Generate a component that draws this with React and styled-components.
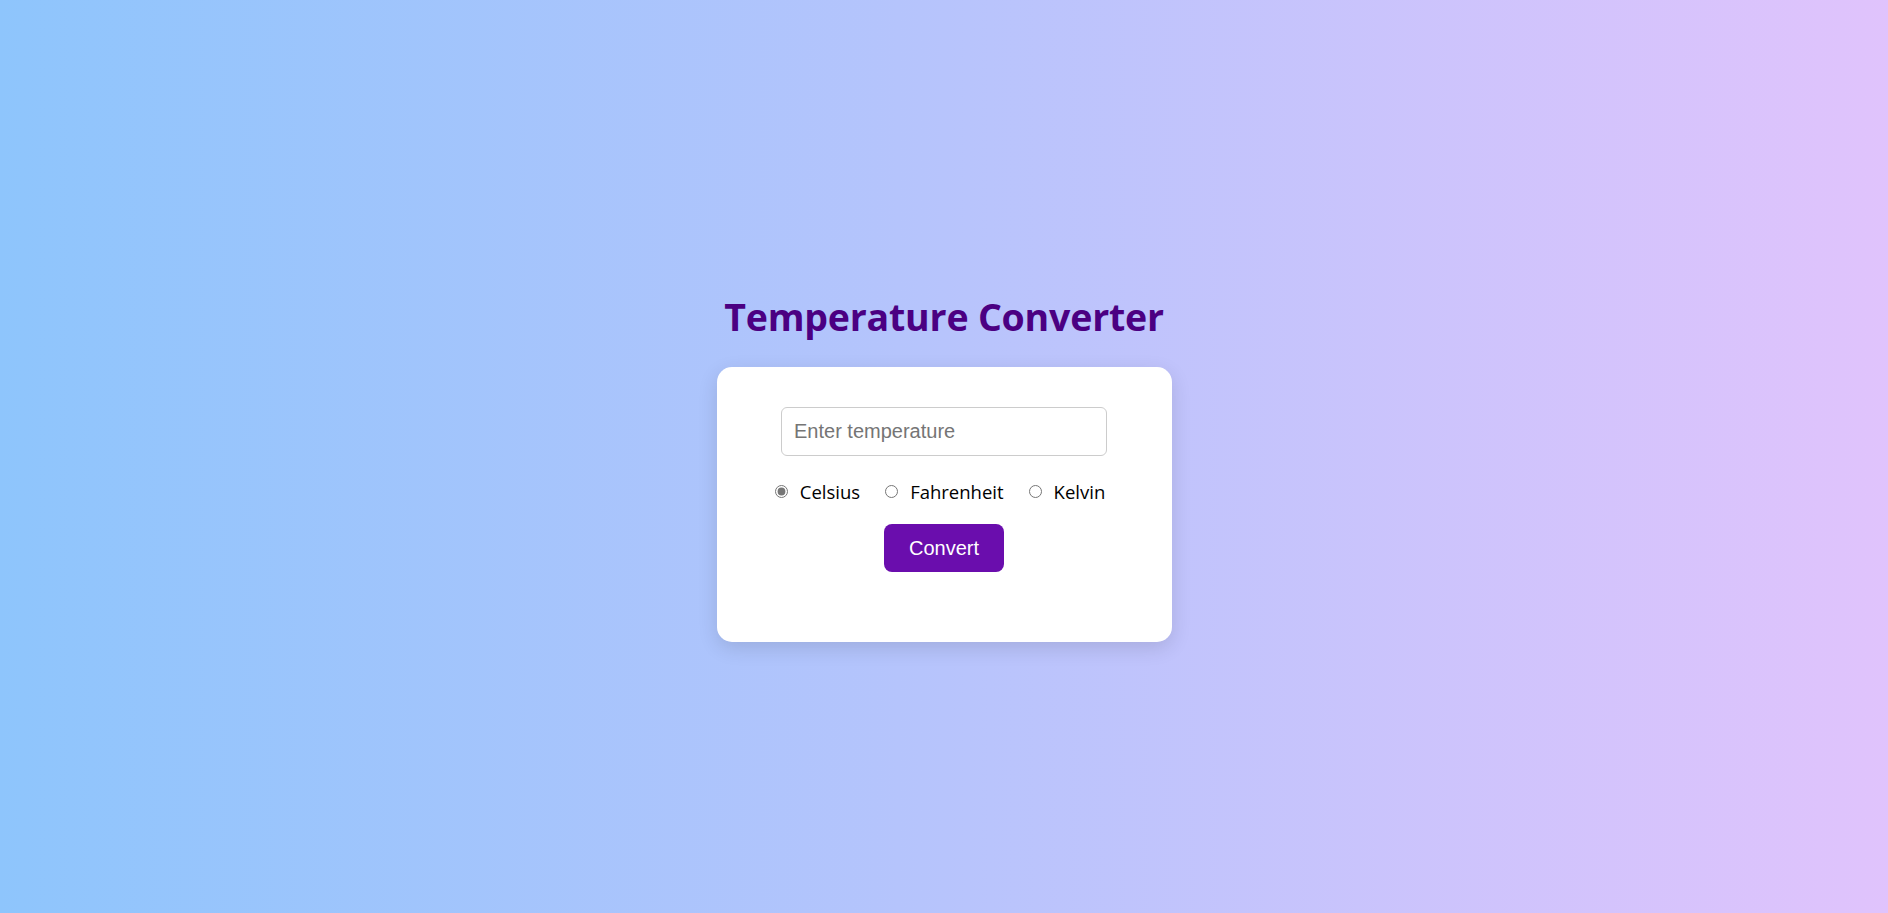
import React, { useState } from "react";
import styled, { createGlobalStyle } from "styled-components";

const GlobalStyle = createGlobalStyle`
  html, body {
    margin: 0;
    padding: 0;
  }
  body {
    font-family: "Open Sans", "Noto Sans", sans-serif;
    background: linear-gradient(to right, #8ec5fc, #e0c3fc);
    min-height: 100vh;
  }
`;

const Page = styled.div`
  min-height: 100vh;
  display: flex;
  flex-direction: column;
  align-items: center;
  justify-content: center;
  padding-top: 19px;
  box-sizing: border-box;
`;

const Title = styled.h1`
  margin: 0 0 25px;
  font-family: "Open Sans", "Noto Sans", sans-serif;
  font-size: 37.5px;
  font-weight: 700;
  color: #4b0082;
  letter-spacing: -0.2px;
`;

const Card = styled.div`
  width: 455px;
  box-sizing: border-box;
  padding: 40px 40px 0;
  background: #fff;
  border-radius: 15px;
  box-shadow: 0 6px 20px rgba(0, 0, 0, 0.12);
  display: flex;
  flex-direction: column;
  align-items: center;
`;

const Input = styled.input`
  width: 300px;
  padding: 12px;
  font-family: "Liberation Sans", Arial, sans-serif;
  font-size: 20px;
  line-height: 23px;
  border: 1px solid #ccc;
  border-radius: 6px;
  outline: none;
  &::placeholder {
    color: #757575;
  }
`;

const Options = styled.div`
  display: flex;
  align-items: center;
  gap: 25px;
  margin: 22px 0 19px;
  padding-right: 8px;
`;

const Option = styled.label`
  display: flex;
  align-items: center;
  font-size: 18.5px;
  line-height: 27px;
  color: #000;
  cursor: pointer;
`;

const Radio = styled.input`
  width: 13px;
  height: 13px;
  margin: 0 12px 0 0;
  accent-color: #767676;
`;

const Button = styled.button`
  padding: 12px 25px;
  font-family: "Liberation Sans", Arial, sans-serif;
  font-size: 20px;
  line-height: 24px;
  color: #fff;
  background: #6a0dad;
  border: none;
  border-radius: 8px;
  cursor: pointer;
`;

const Result = styled.p`
  margin: 0;
  min-height: 70px;
  font-size: 20px;
  color: #333;
`;

const units = ["Celsius", "Fahrenheit", "Kelvin"];

export default function App() {
  const [value, setValue] = useState("");
  const [unit, setUnit] = useState("Celsius");
  const [result, setResult] = useState("");

  const convert = () => {
    const t = parseFloat(value);
    if (isNaN(t)) {
      setResult("");
      return;
    }
    let c = t;
    if (unit === "Fahrenheit") c = (t - 32) * 5 / 9;
    if (unit === "Kelvin") c = t - 273.15;
    const f = c * 9 / 5 + 32;
    const k = c + 273.15;
    setResult(`${c.toFixed(2)} °C / ${f.toFixed(2)} °F / ${k.toFixed(2)} K`);
  };

  return (
    <Page>
      <GlobalStyle />
      <Title>Temperature Converter</Title>
      <Card>
        <Input
          type="number"
          placeholder="Enter temperature"
          value={value}
          onChange={e => setValue(e.target.value)}
        />
        <Options>
          {units.map(u => (
            <Option key={u}>
              <Radio
                type="radio"
                name="unit"
                checked={unit === u}
                onChange={() => setUnit(u)}
              />
              {u}
            </Option>
          ))}
        </Options>
        <Button onClick={convert}>Convert</Button>
        <Result>{result}</Result>
      </Card>
    </Page>
  );
}
